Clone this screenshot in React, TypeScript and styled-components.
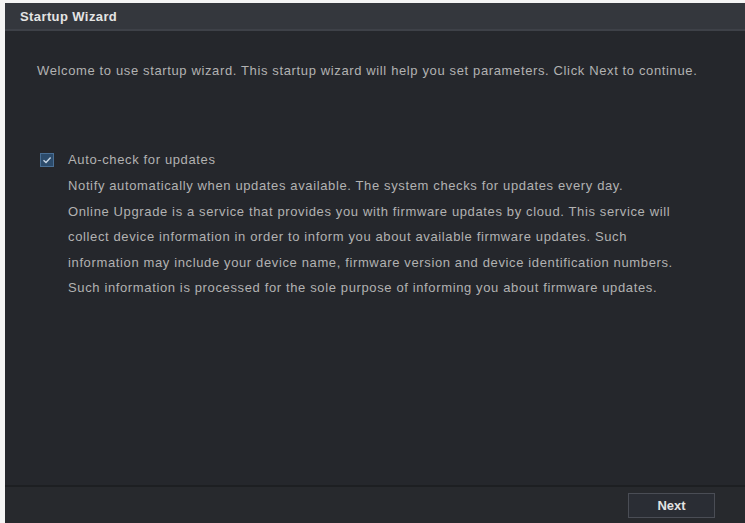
import React, { useState } from "react";
import styled, { createGlobalStyle } from "styled-components";

const GlobalStyle = createGlobalStyle`
  html, body {
    margin: 0;
    padding: 0;
    background: #ffffff;
  }
  body {
    font-family: "Liberation Sans", Arial, sans-serif;
  }
`;

const Page = styled.div`
  width: 745px;
  height: 523px;
  padding: 3px 0 0 5px;
  box-sizing: border-box;
  background: #f4f4f4;
`;

const Wizard = styled.div`
  width: 740px;
  height: 520px;
  display: flex;
  flex-direction: column;
  background: #25272c;
`;

const TitleBar = styled.div`
  height: 26px;
  display: flex;
  align-items: center;
  padding-left: 15px;
  background: #34373d;
  border-bottom: 2px solid #3e4148;
  color: #e4e4e4;
  font-size: 13px;
  font-weight: 600;
  letter-spacing: 0.4px;
`;

const Body = styled.div`
  flex: 1;
  padding: 32px 0 0 32px;
  color: #b2b2b2;
  font-size: 13px;
  letter-spacing: 0.63px;
`;

const Welcome = styled.p`
  margin: 0 0 74px;
  white-space: nowrap;
`;

const CheckRow = styled.label`
  display: flex;
  align-items: center;
  gap: 14px;
  padding-left: 3px;
  cursor: pointer;
`;

const Box = styled.span<{ $on: boolean }>`
  width: 12px;
  height: 12px;
  border: 1px solid #4a6f95;
  background: ${(p) => (p.$on ? "#2c4b6b" : "transparent")};
  display: flex;
  align-items: center;
  justify-content: center;
`;

const Notes = styled.div`
  padding-left: 31px;
  margin-top: 6px;
  line-height: 25.5px;
  white-space: nowrap;
`;

const Footer = styled.div`
  height: 36px;
  border-top: 2px solid #1d1f22;
  background: #27292d;
  display: flex;
  align-items: center;
  justify-content: flex-end;
  padding-right: 30px;
`;

const NextButton = styled.button`
  width: 87px;
  height: 25px;
  background: #2a2d34;
  border: 1px solid #4a4d55;
  color: #e2e2e2;
  font-family: "Liberation Sans", Arial, sans-serif;
  font-size: 13px;
  font-weight: 600;
  cursor: pointer;
`;

const lines = [
  "Notify automatically when updates available. The system checks for updates every day.",
  "Online Upgrade is a service that provides you with firmware updates by cloud. This service will",
  "collect device information in order to inform you about available firmware updates. Such",
  "information may include your device name, firmware version and device identification numbers.",
  "Such information is processed for the sole purpose of informing you about firmware updates.",
];

export default function App() {
  const [auto, setAuto] = useState(true);

  return (
    <Page>
      <GlobalStyle />
      <Wizard>
        <TitleBar>Startup Wizard</TitleBar>
        <Body>
          <Welcome>
            Welcome to use startup wizard. This startup wizard will help you set
            parameters. Click Next to continue.
          </Welcome>
          <CheckRow onClick={() => setAuto(!auto)}>
            <Box $on={auto}>
              {auto && (
                <svg width="10" height="10" viewBox="0 0 10 10">
                  <path d="M1.5 5.2 L4 7.5 L8.6 2.5" stroke="#c8d6e4" strokeWidth="1.4" fill="none" />
                </svg>
              )}
            </Box>
            <span>Auto-check for updates</span>
          </CheckRow>
          <Notes>
            {lines.map((l) => (
              <div key={l}>{l}</div>
            ))}
          </Notes>
        </Body>
        <Footer>
          <NextButton>Next</NextButton>
        </Footer>
      </Wizard>
    </Page>
  );
}
